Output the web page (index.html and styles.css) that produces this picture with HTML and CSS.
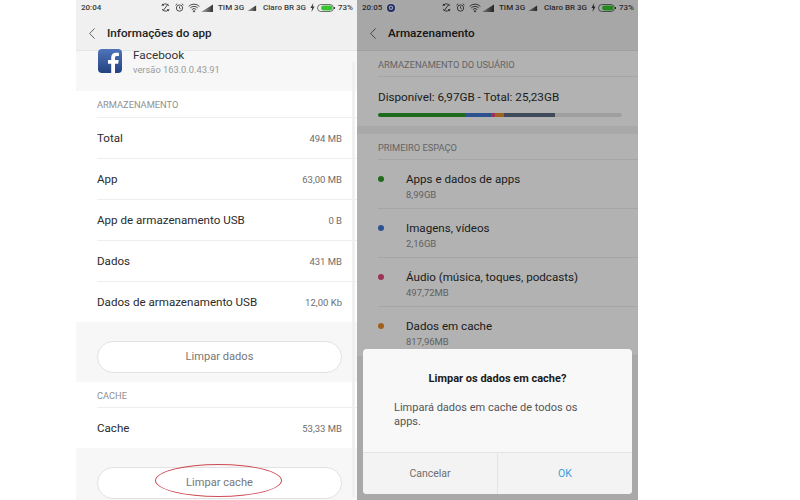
FILE: index.html
```html
<!DOCTYPE html>
<html lang="pt-BR">
<head>
  <meta charset="UTF-8" />
  <title>Limpar cache</title>
  <link rel="stylesheet" href="styles.css">
</head>
<body>
  <svg class="defs" width="0" height="0">
    <symbol id="i-sync" viewBox="0 0 10 10"><path d="M8.600 3.400A4 4 0 0 0 2 2.200M1.400 6.600A4 4 0 0 0 8 7.800M1 3.400l1-2.400.8 2.200M9 6.600l-1 2.400-.8-2.200M2 9l6-8" fill="none" stroke="currentColor" stroke-width="1"/></symbol>
    <symbol id="i-alarm" viewBox="0 0 10 10"><circle cx="5" cy="5.600" r="3.500" fill="none" stroke="currentColor" stroke-width="1"/><path d="M5 3.800v2l1.300.7M.6 2.400 2.400.8M9.400 2.400 7.600.8" fill="none" stroke="currentColor" stroke-width="1"/></symbol>
    <symbol id="i-wifi" viewBox="0 0 12 10"><path d="M.6 3.400a7.600 7.600 0 0 1 10.800 0M2.200 5a5.300 5.300 0 0 1 7.600 0M3.800 6.600a3 3 0 0 1 4.400 0" fill="none" stroke="currentColor" stroke-width=".9"/><path d="M6 9.400 4.700 8a1.800 1.800 0 0 1 2.600 0z" fill="currentColor"/></symbol>
    <symbol id="i-signal" viewBox="0 0 13 8"><defs><linearGradient id="sig-fade" x1="0" y1="0" x2="1" y2="0"><stop offset="0" stop-color="currentColor" stop-opacity=".35"/><stop offset="1" stop-color="currentColor" stop-opacity=".95"/></linearGradient></defs><path d="M0 8 12 .5V8z" fill="url(#sig-fade)"/></symbol>
    <symbol id="i-bolt" viewBox="0 0 5 9"><path d="M3.300 0 .4 5h1.700L1.500 9l3.100-5.400H2.800z" fill="currentColor"/></symbol>
    <symbol id="i-battery" viewBox="0 0 18 8"><rect x=".5" y=".5" width="16" height="7" rx="3.500" fill="none" stroke="currentColor" stroke-width=".7"/><rect x="4" y="1.600" width="11.500" height="4.800" rx="2.400" fill="#35c52e"/><rect x="17" y="3" width="1" height="2" fill="currentColor"/></symbol>
    <symbol id="i-shield" viewBox="0 0 10 10"><circle cx="5" cy="5" r="5" fill="#fff"/><circle cx="5" cy="5" r="4" fill="#2a3f8f"/><circle cx="5" cy="4.800" r="2.200" fill="#e8e8f4"/><circle cx="5" cy="4.800" r="1" fill="#2a3f8f"/></symbol>
    <symbol id="i-back" viewBox="0 0 6 11"><path d="M5.600 .4.700 5.500l4.900 5.100" fill="none" stroke="currentColor" stroke-width=".9"/></symbol>
  </svg>

  <div class="page">
    <!-- tela da esquerda -->
    <div class="screen">
      <div class="topbar">
        <div class="status">
          <span>20:04</span>
          <div class="status-right">
            <svg class="ic-sync"><use href="#i-sync"/></svg>
            <svg class="ic-alarm"><use href="#i-alarm"/></svg>
            <svg class="ic-wifi"><use href="#i-wifi"/></svg>
            <svg class="ic-sig"><use href="#i-signal"/></svg>
            <span>TIM 3G</span>
            <svg class="ic-sig small"><use href="#i-signal"/></svg>
            <span>Claro BR 3G</span>
            <svg class="ic-bolt"><use href="#i-bolt"/></svg>
            <svg class="ic-batt"><use href="#i-battery"/></svg>
            <span>73%</span>
          </div>
        </div>
        <div class="toolbar">
          <svg class="back"><use href="#i-back"/></svg>
          <h1>Informações do app</h1>
        </div>
      </div>

      <div class="app-head">
        <svg class="fb" viewBox="0 0 24 24">
          <defs>
            <linearGradient id="fb-grad" x1="0" y1="0" x2="0" y2="1">
              <stop offset="0" stop-color="#4f74bb"/>
              <stop offset="1" stop-color="#24427f"/>
            </linearGradient>
          </defs>
          <rect width="24" height="24" rx="4" fill="url(#fb-grad)"/>
          <path d="M17 24v-9.200h3.200l.5-3.700H17V8.900c0-1.100.3-1.800 1.900-1.800h2V3.800c-.4 0-1.500-.1-2.900-.1-2.900 0-4.800 1.700-4.800 4.900v2.500H10v3.700h3.200V24z" fill="#fff"/>
        </svg>
        <div>
          <div class="app-name">Facebook</div>
          <div class="app-ver">versão 163.0.0.43.91</div>
        </div>
      </div>

      <div class="group">
        <div class="group-title">ARMAZENAMENTO</div>
        <div class="row"><span>Total</span><span class="val">494 MB</span></div>
        <div class="row"><span>App</span><span class="val">63,00 MB</span></div>
        <div class="row"><span>App de armazenamento USB</span><span class="val">0 B</span></div>
        <div class="row"><span>Dados</span><span class="val">431 MB</span></div>
        <div class="row"><span>Dados de armazenamento USB</span><span class="val">12,00 Kb</span></div>
      </div>
      <div class="btn-area">
        <div class="pill">Limpar dados</div>
      </div>
      <div class="group group-cache">
        <div class="group-title">CACHE</div>
        <div class="row"><span>Cache</span><span class="val">53,33 MB</span></div>
      </div>
      <div class="btn-area">
        <div class="pill">Limpar cache</div>
      </div>

      <div class="scrollbar"></div>
      <div class="mark"></div>
    </div>

    <!-- tela da direita -->
    <div class="screen screen-dim">
      <div class="topbar">
        <div class="status">
          <div class="status-left">
            <span>20:05</span>
            <svg class="ic-shield"><use href="#i-shield"/></svg>
          </div>
          <div class="status-right">
            <svg class="ic-sync"><use href="#i-sync"/></svg>
            <svg class="ic-alarm"><use href="#i-alarm"/></svg>
            <svg class="ic-wifi"><use href="#i-wifi"/></svg>
            <svg class="ic-sig"><use href="#i-signal"/></svg>
            <span>TIM 3G</span>
            <svg class="ic-sig small"><use href="#i-signal"/></svg>
            <span>Claro BR 3G</span>
            <svg class="ic-bolt"><use href="#i-bolt"/></svg>
            <svg class="ic-batt"><use href="#i-battery"/></svg>
            <span>73%</span>
          </div>
        </div>
        <div class="toolbar">
          <svg class="back"><use href="#i-back"/></svg>
          <h1>Armazenamento</h1>
        </div>
      </div>

      <div class="group group-user">
        <div class="group-title">ARMAZENAMENTO DO USUÁRIO</div>
        <div class="avail">Disponível: 6,97GB - Total: 25,23GB</div>
        <div class="bar">
          <span class="seg c-green" style="width: 35.7%"></span>
          <span class="seg c-blue" style="width: 10.7%"></span>
          <span class="seg c-pink" style="width: 1.6%"></span>
          <span class="seg c-orange" style="width: 3.7%"></span>
          <span class="seg c-slate" style="width: 20.9%"></span>
        </div>
      </div>
      <div class="group group-space">
        <div class="group-title">PRIMEIRO ESPAÇO</div>
        <div class="item">
          <span class="dot c-green"></span>
          <div><div class="item-name">Apps e dados de apps</div><div class="item-size">8,99GB</div></div>
        </div>
        <div class="item">
          <span class="dot c-blue"></span>
          <div><div class="item-name">Imagens, vídeos</div><div class="item-size">2,16GB</div></div>
        </div>
        <div class="item">
          <span class="dot c-pink"></span>
          <div><div class="item-name">Áudio (música, toques, podcasts)</div><div class="item-size">497,72MB</div></div>
        </div>
        <div class="item">
          <span class="dot c-orange"></span>
          <div><div class="item-name">Dados em cache</div><div class="item-size">817,96MB</div></div>
        </div>
      </div>

      <div class="scrim"></div>
      <div class="dialog">
        <div class="dialog-title">Limpar os dados em cache?</div>
        <p class="dialog-text">Limpará dados em cache de todos os apps.</p>
        <div class="dialog-btns">
          <div class="dialog-btn">Cancelar</div>
          <div class="dialog-btn ok">OK</div>
        </div>
      </div>
    </div>
  </div>
</body>
</html>
```

FILE: styles.css
```css
body {
  margin: 0;
  background: #ffffff;
  font-family: Roboto, "Liberation Sans", sans-serif;
  color: #2b2b2b;
}

.defs {
  position: absolute;
}

.page {
  display: flex;
  width: 562px;
  height: 500px;
  margin-left: 76px;
}

.screen {
  position: relative;
  width: 281px;
  height: 500px;
  overflow: hidden;
  background: #ffffff;
}

.screen-dim {
  background: #f2f2f2;
}

/* barra de cima */
.topbar {
  height: 51px;
  background: #f0f0f0;
  border-bottom: 1px solid #e6e6e6;
  box-sizing: border-box;
}

.status {
  display: flex;
  justify-content: space-between;
  align-items: center;
  height: 15px;
  padding: 0 4px 0 5px;
  font-size: 8px;
  font-weight: 500;
  color: #3a3a3a;
}

.status-left {
  display: flex;
  align-items: center;
  gap: 4px;
}

.status-right {
  display: flex;
  align-items: center;
}

.ic-sync {
  width: 9px;
  height: 9px;
  margin-right: 5px;
}

.ic-alarm {
  width: 9px;
  height: 9px;
  margin-right: 4px;
}

.ic-wifi {
  width: 12px;
  height: 10px;
  margin-right: 1px;
}

.ic-sig {
  width: 13px;
  height: 8px;
  margin-right: 4px;
}

.ic-sig.small {
  width: 10px;
  height: 6px;
  margin-left: 3px;
  margin-right: 6px;
}

.ic-bolt {
  width: 5px;
  height: 9px;
  margin-left: 4px;
  margin-right: 2px;
}

.ic-batt {
  width: 18px;
  height: 8px;
  margin-right: 3px;
}

.ic-shield {
  width: 10px;
  height: 10px;
}

.toolbar {
  display: flex;
  align-items: center;
  height: 36px;
  padding-left: 13px;
}

.back {
  width: 6px;
  height: 11px;
  margin-right: 12px;
  color: #555555;
}

h1 {
  margin: 0;
  font-size: 11.7px;
  font-weight: 500;
  color: #222222;
}

/* app */
.app-head {
  display: flex;
  gap: 11px;
  height: 40px;
  padding-left: 22px;
  background: #f7f7f7;
  box-sizing: border-box;
}

.fb {
  width: 24px;
  height: 24px;
  margin-top: -2px;
}

.app-name {
  font-size: 11.8px;
  line-height: 14px;
  margin-top: -3px;
  color: #333333;
}

.app-ver {
  font-size: 9.3px;
  line-height: 12px;
  margin-top: 2px;
  color: #9a9a9a;
}

/* grupos */
.group {
  padding-left: 21px;
  background: #ffffff;
}

.group-title {
  height: 27px;
  line-height: 27px;
  font-size: 9.3px;
  color: #909090;
  border-bottom: 1px solid #eeeeee;
  box-sizing: border-box;
}

.group-cache .group-title,
.group-user .group-title,
.group-space .group-title {
  height: 26px;
}

.row {
  display: flex;
  justify-content: space-between;
  align-items: center;
  height: 41px;
  padding-right: 15px;
  font-size: 11.6px;
  border-bottom: 1px solid #eeeeee;
  box-sizing: border-box;
}

.row:last-child {
  height: 40px;
  border-bottom: none;
}

.val {
  font-size: 9.5px;
  color: #6e6e6e;
}

.btn-area {
  height: 60px;
  padding: 19px 15px 0 21px;
  background: #f7f7f7;
  box-sizing: border-box;
}

.pill {
  height: 32px;
  line-height: 30px;
  text-align: center;
  font-size: 11.1px;
  color: #777777;
  background: #ffffff;
  border: 1px solid #e2e2e2;
  border-radius: 16px;
  box-sizing: border-box;
}

.scrollbar {
  position: absolute;
  top: 62px;
  right: 2px;
  width: 3px;
  height: 435px;
  background: #f0f0f0;
}

.mark {
  position: absolute;
  left: 79px;
  top: 464px;
  width: 127px;
  height: 33px;
  border: 1.5px solid #cf4a55;
  border-radius: 50%;
  box-sizing: border-box;
}

/* tela de armazenamento */
.group-user {
  height: 75px;
}

.avail {
  margin-top: 12px;
  font-size: 11.7px;
  line-height: 16px;
}

.bar {
  display: flex;
  width: 244px;
  height: 4px;
  margin-top: 8px;
  border-radius: 2px;
  background: #e4e4e4;
  overflow: hidden;
}

.seg {
  height: 100%;
}

.group-space {
  margin-top: 8px;
}

.item {
  display: flex;
  align-items: flex-start;
  height: 49px;
  padding-top: 11px;
  border-bottom: 1px solid #eeeeee;
  box-sizing: border-box;
}

.dot {
  width: 6px;
  height: 6px;
  margin-top: 5px;
  margin-right: 22px;
  border-radius: 50%;
}

.item-name {
  font-size: 11.6px;
  line-height: 16px;
}

.item-size {
  font-size: 9.5px;
  line-height: 12px;
  margin-top: 2px;
  color: #8c8c8c;
}

.c-green { background: #2c9a2c; }
.c-blue { background: #3f78cf; }
.c-pink { background: #e0487f; }
.c-orange { background: #e58a2c; }
.c-slate { background: #5a6a80; }

.scrim {
  position: absolute;
  inset: 0;
  background: rgba(0, 0, 0, 0.3);
}

.dialog {
  position: absolute;
  left: 6px;
  top: 349px;
  width: 269px;
  height: 145px;
  display: flex;
  flex-direction: column;
  background: #f8f8f8;
  border-radius: 4px;
  overflow: hidden;
}

.dialog-title {
  margin-top: 22px;
  text-align: center;
  font-size: 11px;
  font-weight: 700;
  line-height: 16px;
  color: #1a1a1a;
}

.dialog-text {
  margin: 14px 50px 0 31px;
  font-size: 11px;
  line-height: 14px;
  color: #555555;
  flex: 1;
}

.dialog-btns {
  display: flex;
  height: 41px;
  background: #f3f3f3;
  border-top: 1px solid #e4e4e4;
}

.dialog-btn {
  flex: 1;
  text-align: center;
  line-height: 41px;
  font-size: 10.5px;
  color: #6e6e6e;
}

.dialog-btn.ok {
  border-left: 1px solid #e4e4e4;
  color: #3d9bdc;
}
```
